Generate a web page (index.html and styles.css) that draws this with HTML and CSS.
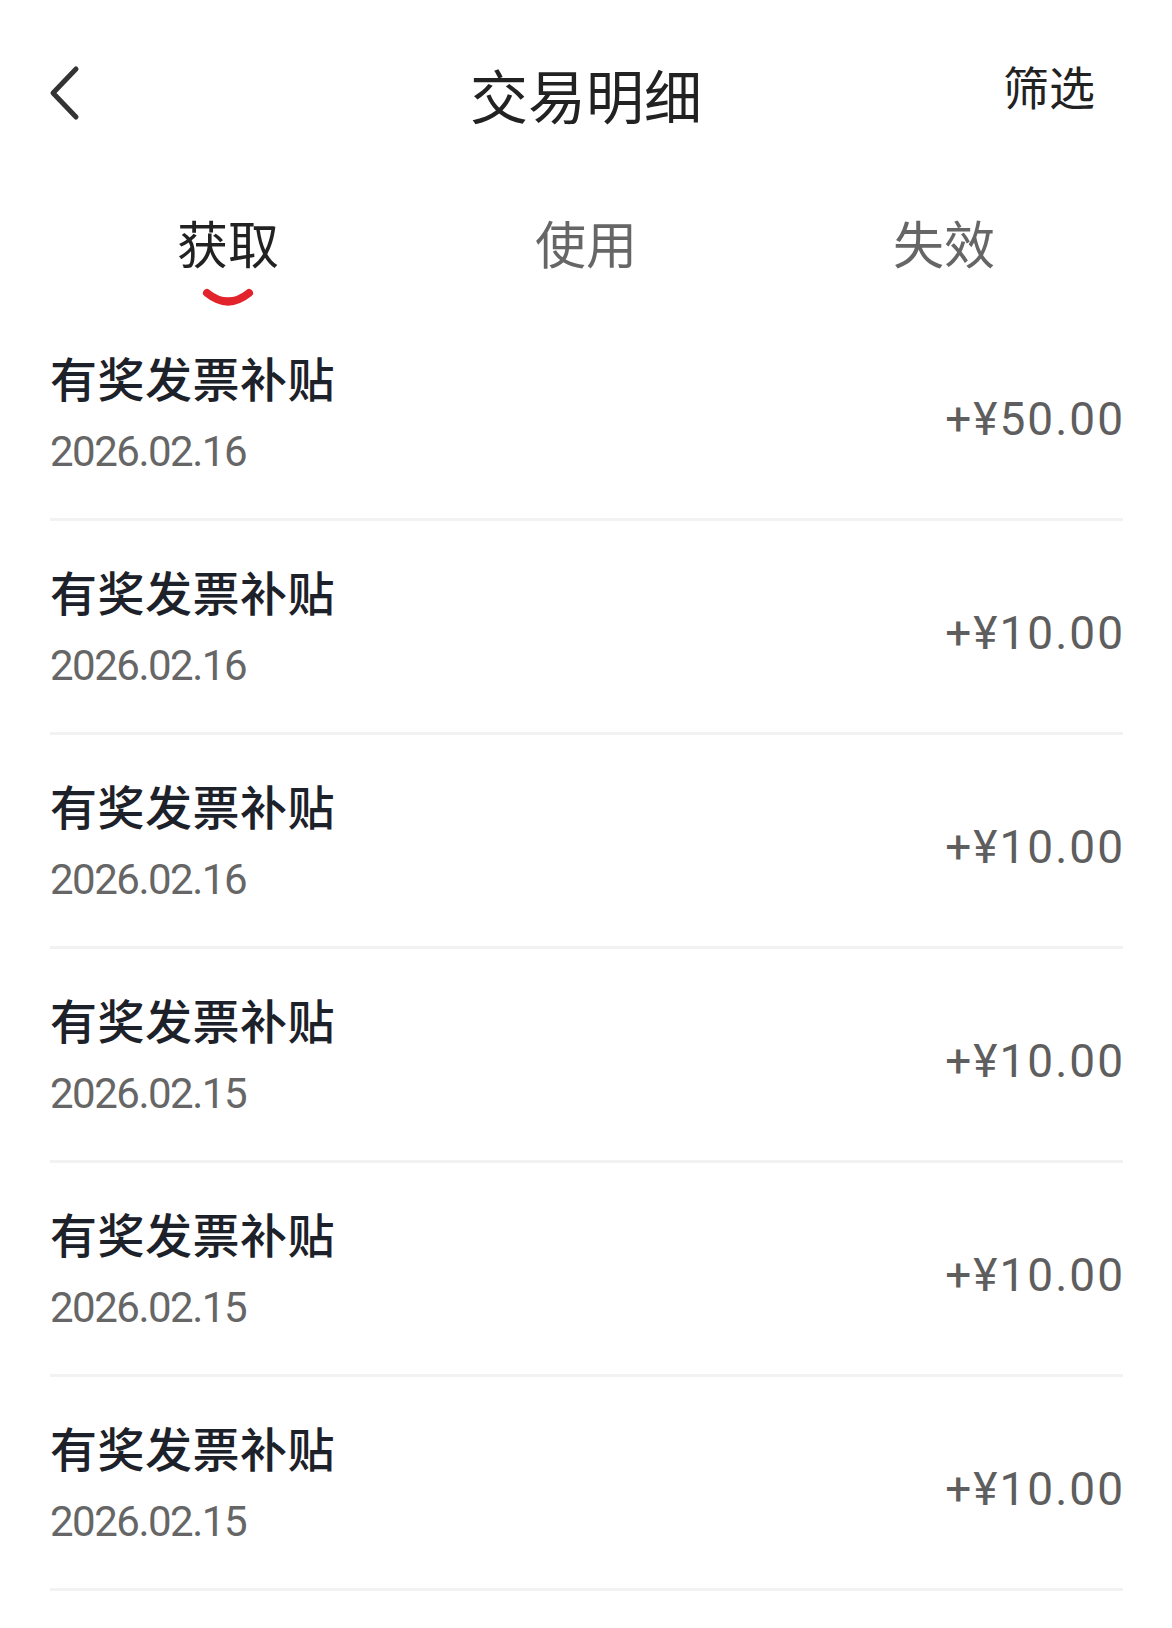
FILE: index.html
```html
<!DOCTYPE html>
<html lang="zh-CN">
<head>
    <meta charset="UTF-8" />
    <meta name="viewport" content="width=device-width, initial-scale=1.0" />
    <title>交易明细</title>
    <link rel="stylesheet" href="styles.css">
</head>
<body>
    <div id="page">
        <div class="header">
            <div class="back">
                <svg width="34" height="56" viewBox="0 0 34 56">
                    <path d="M28 4 L5 28 L28 52" fill="none" stroke="#333" stroke-width="5" stroke-linecap="round" stroke-linejoin="round" />
                </svg>
            </div>
            <h1 class="title">交易明细</h1>
            <div class="filter">筛选</div>
        </div>

        <div class="tabs">
            <div class="tab active">
                <span>获取</span>
                <svg class="smile" width="52" height="19" viewBox="0 0 52 19">
                    <path d="M5 5 Q26 22 47 5" fill="none" stroke="#e3232c" stroke-width="8" stroke-linecap="round" />
                </svg>
            </div>
            <div class="tab"><span>使用</span></div>
            <div class="tab"><span>失效</span></div>
        </div>

        <div class="list">
            <div class="row">
                <div class="info">
                    <div class="name">有奖发票补贴</div>
                    <div class="date">2026.02.16</div>
                </div>
                <div class="amount">+¥50.00</div>
            </div>
            <div class="row">
                <div class="info">
                    <div class="name">有奖发票补贴</div>
                    <div class="date">2026.02.16</div>
                </div>
                <div class="amount">+¥10.00</div>
            </div>
            <div class="row">
                <div class="info">
                    <div class="name">有奖发票补贴</div>
                    <div class="date">2026.02.16</div>
                </div>
                <div class="amount">+¥10.00</div>
            </div>
            <div class="row">
                <div class="info">
                    <div class="name">有奖发票补贴</div>
                    <div class="date">2026.02.15</div>
                </div>
                <div class="amount">+¥10.00</div>
            </div>
            <div class="row">
                <div class="info">
                    <div class="name">有奖发票补贴</div>
                    <div class="date">2026.02.15</div>
                </div>
                <div class="amount">+¥10.00</div>
            </div>
            <div class="row">
                <div class="info">
                    <div class="name">有奖发票补贴</div>
                    <div class="date">2026.02.15</div>
                </div>
                <div class="amount">+¥10.00</div>
            </div>
        </div>
    </div>
</body>
</html>
```

FILE: styles.css
```css
body {
    margin: 0;
    padding: 0;
    background: #fff;
    font-family: Roboto, "Noto Sans CJK SC", sans-serif;
    color: #222;
}

/* 顶部标题栏 */
.header {
    height: 150px;
    display: flex;
    align-items: flex-start;
    justify-content: space-between;
    padding: 0 48px;
    box-sizing: border-box;
}
.back {
    margin-top: 65px;
    width: 220px;
}
.back svg {
    display: block;
}
.title {
    margin: 64px 0 0;
    font-size: 58px;
    line-height: 70px;
    font-weight: normal;
    color: #222;
}
.filter {
    margin-top: 59px;
    width: 220px;
    padding-right: 29px;
    box-sizing: border-box;
    text-align: right;
    font-size: 46px;
    line-height: 60px;
    color: #222;
}

/* 获取 / 使用 / 失效 */
.tabs {
    display: grid;
    grid-template-columns: repeat(3, 1fr);
    padding: 65px 49px 0;
    height: 157px;
    box-sizing: border-box;
}
.tab {
    display: flex;
    flex-direction: column;
    align-items: center;
    font-size: 51px;
    line-height: 64px;
    color: #666;
}
.tab.active {
    color: #222;
}
.smile {
    display: block;
    margin-top: 9px;
}

/* 明细列表 */
.list {
    padding: 0 49px 0 50px;
}
.row {
    display: flex;
    justify-content: space-between;
    align-items: center;
    padding: 44px 0 41px;
    border-bottom: 3px solid #f2f2f2;
}
.name {
    font-size: 47px;
    line-height: 60px;
    letter-spacing: 0.5px;
    font-weight: 500;
    color: #1d2129;
}
.date {
    margin-top: 16px;
    font-size: 42px;
    line-height: 50px;
    letter-spacing: -1.5px;
    color: #666;
}
.amount {
    margin-top: 9px;
    margin-right: -2px;
    font-size: 46px;
    line-height: 50px;
    letter-spacing: 2px;
    color: #5e5e5e;
}
```
